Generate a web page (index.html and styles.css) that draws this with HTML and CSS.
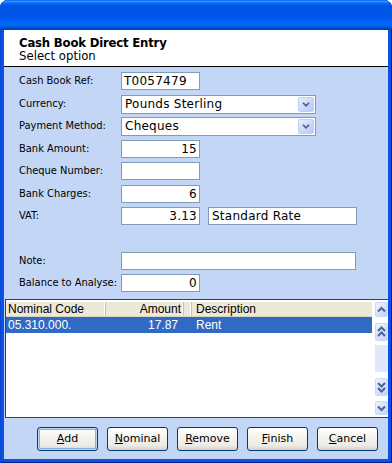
FILE: index.html
```html
<!DOCTYPE html>
<html>
<head>
<meta charset="utf-8">
<link rel="stylesheet" href="styles.css">
</head>
<body>
<div class="window">
  <div class="titlebar"></div>
  <div class="frame">
    <div class="header">
      <div class="h-title">Cash Book Direct Entry</div>
      <div class="h-sub">Select option</div>
    </div>
    <div class="form">
      <div class="label">Cash Book Ref:</div>
      <div class="field"><div class="box short">T0057479</div></div>

      <div class="label">Currency:</div>
      <div class="field"><div class="box combo"><span class="combo-text">Pounds Sterling</span><span class="combo-btn"><svg width="16" height="15" viewBox="0 0 16 15"><path d="M4.5 5.5 L8 9 L11.5 5.5" fill="none" stroke="#4d6185" stroke-width="2"/></svg></span></div></div>

      <div class="label">Payment Method:</div>
      <div class="field"><div class="box combo"><span class="combo-text">Cheques</span><span class="combo-btn"><svg width="16" height="15" viewBox="0 0 16 15"><path d="M4.5 5.5 L8 9 L11.5 5.5" fill="none" stroke="#4d6185" stroke-width="2"/></svg></span></div></div>

      <div class="label">Bank Amount:</div>
      <div class="field"><div class="box short num">15</div></div>

      <div class="label">Cheque Number:</div>
      <div class="field"><div class="box short"></div></div>

      <div class="label">Bank Charges:</div>
      <div class="field"><div class="box short num">6</div></div>

      <div class="label">VAT:</div>
      <div class="field vat"><div class="box short num">3.13</div><div class="box vat-desc">Standard Rate</div></div>

      <div class="label">Note:</div>
      <div class="field"><div class="box note"></div></div>

      <div class="label">Balance to Analyse:</div>
      <div class="field"><div class="box short num">0</div></div>
    </div>
    <div class="grid">
      <div class="table">
        <div class="thead">
          <div class="th c1">Nominal Code</div>
          <div class="th c2">Amount</div>
          <div class="th c3"></div>
          <div class="th c4">Description</div>
        </div>
        <div class="trow selected">
          <div class="td c1">05.310.000.</div>
          <div class="td c2">17.87</div>
          <div class="td c3"></div>
          <div class="td c4">Rent</div>
        </div>
      </div>
      <div class="scroll">
        <div class="sbtn s-up"><svg width="13" height="15" viewBox="0 0 13 15"><path d="M3 9.5 L6.5 6 L10 9.5" fill="none" stroke="#4e6393" stroke-width="2"/></svg></div>
        <div class="sbtn s-dup"><svg width="13" height="18" viewBox="0 0 13 18"><path d="M3 8 L6.5 4.5 L10 8 M3 13 L6.5 9.5 L10 13" fill="none" stroke="#4e6393" stroke-width="2"/></svg></div>
        <div class="track"></div>
        <div class="sbtn s-ddown"><svg width="13" height="18" viewBox="0 0 13 18"><path d="M3 5 L6.5 8.5 L10 5 M3 10 L6.5 13.5 L10 10" fill="none" stroke="#4e6393" stroke-width="2"/></svg></div>
        <div class="sbtn s-down"><svg width="13" height="14" viewBox="0 0 13 14"><path d="M3 5.5 L6.5 9 L10 5.5" fill="none" stroke="#4e6393" stroke-width="2"/></svg></div>
      </div>
    </div>
    <div class="buttons">
      <div class="btn default"><u>A</u>dd</div>
      <div class="btn"><u>N</u>ominal</div>
      <div class="btn"><u>R</u>emove</div>
      <div class="btn"><u>F</u>inish</div>
      <div class="btn"><u>C</u>ancel</div>
    </div>
  </div>
</div>
</body>
</html>
```

FILE: styles.css
```css
* { box-sizing: border-box; }
html, body { margin: 0; padding: 0; background: #fff; }
body { width: 392px; height: 463px; overflow: hidden; font-family: "DejaVu Sans", sans-serif; color: #000; }

.window {
  width: 392px; height: 463px;
  display: flex; flex-direction: column;
  border-radius: 8px 8px 0 0;
  overflow: hidden;
  background: #0b52e4;
  box-shadow: inset 1px 0 #0a47d6, inset -1px 0 #001c8c, inset 0 -1px #001c8c;
}
.titlebar {
  height: 30px; flex: none;
  background: linear-gradient(to bottom, #0058ee 0%, #3593ff 4%, #288eff 6%, #127dff 8%, #036ffc 10%, #0262ee 14%, #0057e5 20%, #0054e3 24%, #0055eb 56%, #005bf5 66%, #026afe 76%, #0062ef 86%, #0052d6 92%, #0046c0 96%, #003eb0 100%);
}
.frame {
  flex: 1;
  margin: 0 4px 4px 4px;
  background: #c4d6f5;
  display: flex; flex-direction: column;
}
.header {
  height: 37px; flex: none;
  background: #fff;
  border-bottom: 1px solid #000;
  padding: 6px 0 0 15px;
}
.h-title {
  font-family: "DejaVu Sans Condensed", "DejaVu Sans", sans-serif;
  font-stretch: condensed;
  font-weight: bold;
  font-size: 13px;
  line-height: 13px;
  letter-spacing: -0.2px;
}
.h-sub {
  font-family: "DejaVu Sans Condensed", "DejaVu Sans", sans-serif;
  font-stretch: condensed;
  font-size: 13px;
  line-height: 14px;
}

.form {
  flex: none;
  height: 232px;
  display: grid;
  grid-template-columns: 102px auto;
  grid-template-rows: 23px 22px 23px 22px 23px 22px 45px 22px 22px;
  align-items: start;
  padding: 5px 0 0 15px;
}
.label {
  font-family: "DejaVu Sans Condensed", "DejaVu Sans", sans-serif;
  font-stretch: condensed;
  font-size: 11px;
  line-height: 18px;
  white-space: nowrap;
}
.field { display: flex; gap: 8px; }
.box {
  height: 18px;
  border: 1px solid #7f9db9;
  background: #fff;
  font-family: "DejaVu Sans", sans-serif;
  font-size: 12px;
  letter-spacing: 0.25px;
  line-height: 16px;
  padding: 0 2px;
  white-space: nowrap;
  overflow: hidden;
}
.short { width: 79px; }
.num { text-align: right; }
.vat-desc { width: 149px; padding-left: 3px; }
.note { width: 235px; }
.combo {
  width: 195px; height: 19px;
  display: flex; align-items: center; justify-content: space-between;
  padding: 0 1px 0 3px;
}
.combo-text { line-height: 17px; }
.combo-btn {
  width: 16px; height: 15px;
  border: 1px solid #bccff6;
  border-radius: 2px;
  background: linear-gradient(135deg, #e6eefe 0%, #c8d8fb 60%, #b8cbf6 100%);
  display: flex; align-items: center; justify-content: center;
}
.combo-btn svg { display: block; }

.grid {
  flex: none;
  height: 119px;
  margin-left: 1px;
  border: 1px solid #1f3e95;
  border-right: 0;
  background: #fff;
  padding-top: 2px;
  display: flex;
}
.table { width: 366px; font-family: "Liberation Sans", Arial, sans-serif; font-size: 12px; }
.thead, .trow { display: flex; }
.thead { height: 15px; background: #ece9d8; border-bottom: 1px solid #d8d4c4; }
.th {
  height: 14px; line-height: 14px;
  border-right: 1px solid #c6c2b0;
  box-shadow: inset -1px 0 #fff;
  white-space: nowrap; overflow: hidden;
}
.trow { height: 16px; line-height: 16px; }
.selected { background: #316ac5; color: #fff; }
.c1 { width: 100px; padding-left: 2px; }
.c2 { width: 78px; text-align: right; }
.th.c2 { padding-right: 2px; }
.td.c2 { padding-right: 6px; }
.c3 { width: 8px; }
.c4 { flex: 1; padding-left: 4px; }
.th.c4 { border-right: 0; box-shadow: none; }

.scroll {
  flex: 1;
  padding-left: 3px;
  display: flex; flex-direction: column;
}
.sbtn {
  width: 13px;
  border: 1px solid #cdd9f6;
  border-radius: 2px;
  background: linear-gradient(135deg, #eef3fe 0%, #d3e0fb 60%, #c3d3f7 100%);
}
.sbtn svg { display: block; margin: -1px; }
.s-up { height: 15px; }
.s-dup { height: 18px; margin-top: 6px; }
.track { height: 27px; margin-top: 4px; background: #e1e8fa; width: 13px; }
.s-ddown { height: 18px; margin-top: 6px; }
.s-down { height: 14px; margin-top: 5px; }

.buttons {
  flex: 1;
  display: flex; justify-content: flex-end; align-items: flex-start;
  gap: 9px;
  padding: 9px 10px 0 0;
}
.btn {
  width: 61px; height: 24px;
  border: 1px solid #003c74;
  border-radius: 3px;
  background: linear-gradient(to bottom, #ffffff 0%, #f4f3ee 40%, #ecebe6 80%, #d6d0c5 100%);
  font-family: "DejaVu Sans", sans-serif;
  font-size: 11px;
  line-height: 22px;
  text-align: center;
  color: #000;
}
.btn.default {
  box-shadow: inset 0 0 0 1px #bcd4f6, inset 0 0 0 2px #89ade4;
}
```
